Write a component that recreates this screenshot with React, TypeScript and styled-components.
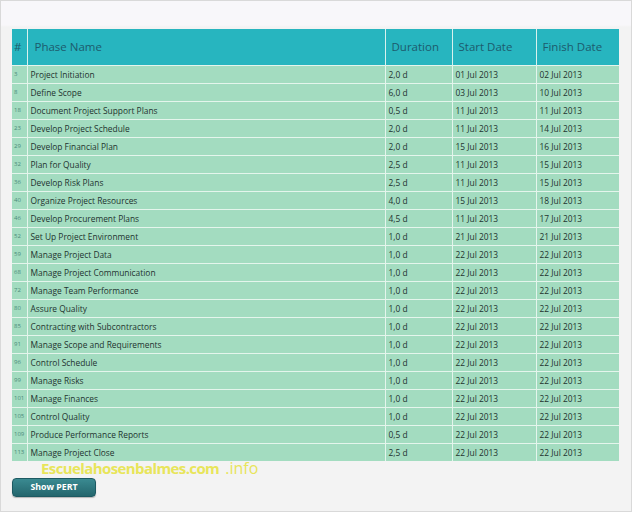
import styled, { createGlobalStyle } from 'styled-components';

const GlobalStyle = createGlobalStyle`
  html, body {
    margin: 0;
    padding: 0;
    background: #ffffff;
  }
  body {
    font-family: "Open Sans", "Liberation Sans", sans-serif;
  }
`;

const Frame = styled.div`
  box-sizing: border-box;
  width: 632px;
  height: 512px;
  border: 1px solid #d9d9d9;
  background: linear-gradient(#f8f7fa 0, #f8f7fa 24px, #f3f3f3 26px, #f3f3f3 100%);
  padding: 28px 0 0 11px;
  position: relative;
`;

const Table = styled.table`
  border-collapse: collapse;
  width: 607px;
  table-layout: fixed;
`;

const HeadCell = styled.th<{ $w: number; $pad?: number }>`
  width: ${(p) => p.$w}px;
  height: 36px;
  padding: 0 0 0 ${(p) => p.$pad ?? 6}px;
  background: #27b5bf;
  color: #1d5b6d;
  font-size: 11.5px;
  font-weight: 400;
  text-align: left;
  border-left: 1px solid #d9f1ee;
  box-sizing: border-box;
  &:first-child {
    border-left: none;
  }
`;

const Row = styled.tr`
  background: #a3dcc0;
`;

const Cell = styled.td<{ $small?: boolean }>`
  height: 17px;
  padding: 0 0 0 ${(p) => (p.$small ? 2 : 3)}px;
  font-size: ${(p) => (p.$small ? 6 : 8.4)}px;
  color: ${(p) => (p.$small ? '#4b8a7a' : '#22332f')};
  border-top: 1px solid #e4f5ec;
  border-left: 1px solid #e4f5ec;
  white-space: nowrap;
  overflow: hidden;
  &:first-child {
    border-left: none;
  }
`;

const Watermark = styled.div`
  position: absolute;
  left: 40px;
  top: 459px;
  line-height: 1;
  font-size: 15px;
  font-weight: 700;
  color: #e7e44a;
  letter-spacing: -0.6px;
  opacity: 0.9;
  pointer-events: none;
  span {
    font-size: 16px;
    font-weight: 400;
    letter-spacing: 0;
    margin-left: 6px;
  }
`;

const Button = styled.button`
  margin-top: 17px;
  width: 84px;
  height: 19px;
  border: 1px solid #1d5a62;
  border-radius: 4px;
  background: linear-gradient(#3a8a91, #24666d);
  color: #ffffff;
  font-family: "Open Sans", "Liberation Sans", sans-serif;
  font-size: 8.8px;
  font-weight: 700;
  padding: 0;
  box-shadow: 0 1px 1px rgba(0, 0, 0, 0.25);
`;

const phases: [number, string, string, string, string][] = [
  [3, 'Project Initiation', '2,0 d', '01 Jul 2013', '02 Jul 2013'],
  [8, 'Define Scope', '6,0 d', '03 Jul 2013', '10 Jul 2013'],
  [18, 'Document Project Support Plans', '0,5 d', '11 Jul 2013', '11 Jul 2013'],
  [23, 'Develop Project Schedule', '2,0 d', '11 Jul 2013', '14 Jul 2013'],
  [29, 'Develop Financial Plan', '2,0 d', '15 Jul 2013', '16 Jul 2013'],
  [32, 'Plan for Quality', '2,5 d', '11 Jul 2013', '15 Jul 2013'],
  [36, 'Develop Risk Plans', '2,5 d', '11 Jul 2013', '15 Jul 2013'],
  [40, 'Organize Project Resources', '4,0 d', '15 Jul 2013', '18 Jul 2013'],
  [46, 'Develop Procurement Plans', '4,5 d', '11 Jul 2013', '17 Jul 2013'],
  [52, 'Set Up Project Environment', '1,0 d', '21 Jul 2013', '21 Jul 2013'],
  [59, 'Manage Project Data', '1,0 d', '22 Jul 2013', '22 Jul 2013'],
  [68, 'Manage Project Communication', '1,0 d', '22 Jul 2013', '22 Jul 2013'],
  [72, 'Manage Team Performance', '1,0 d', '22 Jul 2013', '22 Jul 2013'],
  [80, 'Assure Quality', '1,0 d', '22 Jul 2013', '22 Jul 2013'],
  [85, 'Contracting with Subcontractors', '1,0 d', '22 Jul 2013', '22 Jul 2013'],
  [91, 'Manage Scope and Requirements', '1,0 d', '22 Jul 2013', '22 Jul 2013'],
  [96, 'Control Schedule', '1,0 d', '22 Jul 2013', '22 Jul 2013'],
  [99, 'Manage Risks', '1,0 d', '22 Jul 2013', '22 Jul 2013'],
  [101, 'Manage Finances', '1,0 d', '22 Jul 2013', '22 Jul 2013'],
  [105, 'Control Quality', '1,0 d', '22 Jul 2013', '22 Jul 2013'],
  [109, 'Produce Performance Reports', '0,5 d', '22 Jul 2013', '22 Jul 2013'],
  [113, 'Manage Project Close', '2,5 d', '22 Jul 2013', '22 Jul 2013'],
];

export default function App() {
  return (
    <>
      <GlobalStyle />
      <Frame>
        <Table>
          <thead>
            <tr>
              <HeadCell $w={15} $pad={2}>#</HeadCell>
              <HeadCell $w={358} $pad={7}>Phase Name</HeadCell>
              <HeadCell $w={67}>Duration</HeadCell>
              <HeadCell $w={84}>Start Date</HeadCell>
              <HeadCell $w={83}>Finish Date</HeadCell>
            </tr>
          </thead>
          <tbody>
            {phases.map(([id, name, dur, start, finish]) => (
              <Row key={id}>
                <Cell $small>{id}</Cell>
                <Cell>{name}</Cell>
                <Cell>{dur}</Cell>
                <Cell>{start}</Cell>
                <Cell>{finish}</Cell>
              </Row>
            ))}
          </tbody>
        </Table>
        <Watermark>
          Escuelahosenbalmes.com<span>.info</span>
        </Watermark>
        <Button>Show PERT</Button>
      </Frame>
    </>
  );
}
